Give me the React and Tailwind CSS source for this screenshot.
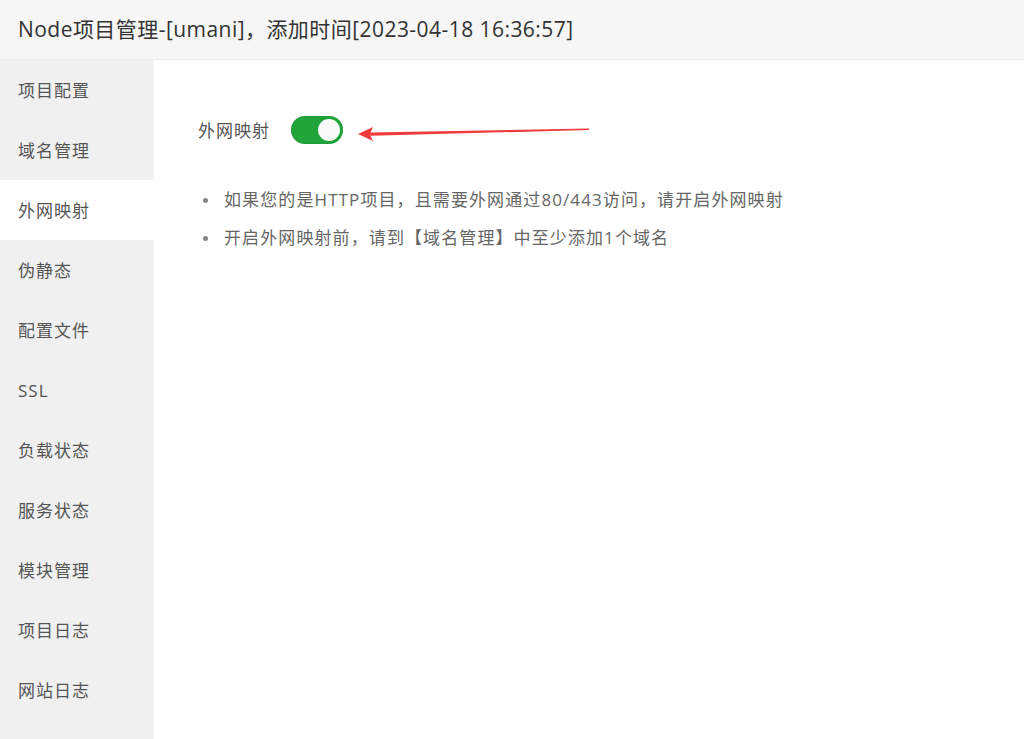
import React from 'react';

const menu = ['项目配置', '域名管理', '外网映射', '伪静态', '配置文件', 'SSL', '负载状态', '服务状态', '模块管理', '项目日志', '网站日志'];

const notes = [
  '如果您的是HTTP项目，且需要外网通过80/443访问，请开启外网映射',
  '开启外网映射前，请到【域名管理】中至少添加1个域名',
];

const Arrow = () => (
  <svg width="240" height="24" viewBox="0 0 240 24" className="ml-3">
    <polygon points="3,16 18,9 15.5,14.5 234,10.5 234,12 15.5,17.8 18,23" fill="#ef3b3b" />
  </svg>
);

export default function App() {
  return (
    <div
      className="w-[1024px] h-[739px] bg-white flex flex-col overflow-hidden"
      style={{ fontFamily: '"Open Sans", "Noto Sans CJK SC", sans-serif' }}
    >
      <div className="h-[60px] shrink-0 bg-[#f6f6f6] border-b border-[#ebebeb] flex items-center px-[18px]">
        <span className="text-[21px] text-[#333] tracking-[0.45px]">Node项目管理-[umani]，添加时间[2023-04-18 16:36:57]</span>
      </div>
      <div className="flex flex-1">
        <div className="w-[154px] bg-[#f0f0f0] flex flex-col">
          {menu.map((m, i) => (
            <div
              key={m}
              className={`h-[60px] flex items-center pl-[18px] pt-[2px] text-[17px] tracking-[1px] text-[#555] ${i === 2 ? 'bg-white' : ''}`}
            >
              {m}
            </div>
          ))}
        </div>
        <div className="flex-1 pl-[44px] pt-[55px]">
          <div className="flex items-center h-[30px]">
            <span className="text-[17px] tracking-[1px] text-[#555] w-[93px] pt-[2px]">外网映射</span>
            <div className="w-[52px] h-[28px] rounded-full bg-[#20a53a] flex items-center justify-end pr-[3px] shadow-[inset_0_0_2px_rgba(0,0,0,0.2)]">
              <div className="w-[22px] h-[22px] rounded-full bg-[#fafafa]" />
            </div>
            <Arrow />
          </div>
          <ul className="mt-[44px] flex flex-col gap-[16px] pl-[5px]">
            {notes.map((n) => (
              <li key={n} className="flex items-center text-[17px] tracking-[1.1px] text-[#666] h-[22px]">
                <span className="w-[5px] h-[5px] rounded-full bg-[#888] mr-[16px]" />
                {n}
              </li>
            ))}
          </ul>
        </div>
      </div>
    </div>
  );
}
